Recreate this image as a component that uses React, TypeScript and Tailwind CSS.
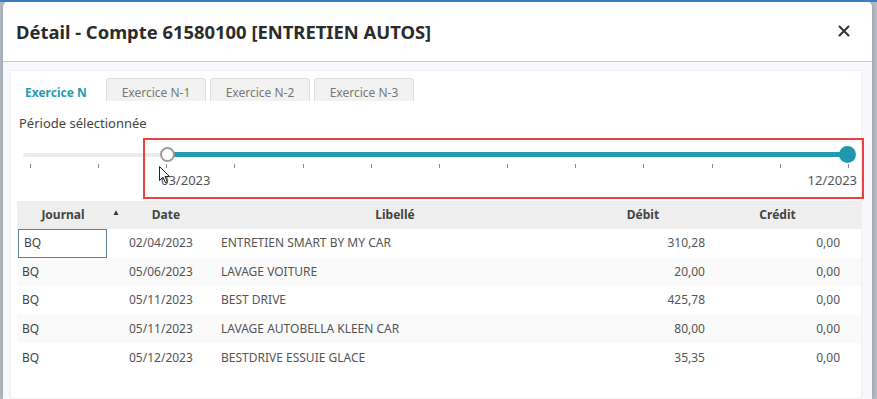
import React from "react";

const rows = [
  { journal: "BQ", date: "02/04/2023", libelle: "ENTRETIEN SMART BY MY CAR", debit: "310,28", credit: "0,00" },
  { journal: "BQ", date: "05/06/2023", libelle: "LAVAGE VOITURE", debit: "20,00", credit: "0,00" },
  { journal: "BQ", date: "05/11/2023", libelle: "BEST DRIVE", debit: "425,78", credit: "0,00" },
  { journal: "BQ", date: "05/11/2023", libelle: "LAVAGE AUTOBELLA KLEEN CAR", debit: "80,00", credit: "0,00" },
  { journal: "BQ", date: "05/12/2023", libelle: "BESTDRIVE ESSUIE GLACE", debit: "35,35", credit: "0,00" },
];

const cols = "grid grid-cols-[92px_106px_360px_136px_133px]";

function Tabs() {
  return (
    <div className="flex items-start h-[23px] gap-[4px]">
      <div className="w-[91px] h-[23px] pl-[14px] pt-[4px] text-[12px] font-bold text-[#239cb3] leading-[22px]">Exercice N</div>
      {["Exercice N-1", "Exercice N-2", "Exercice N-3"].map((t) => (
        <div
          key={t}
          className="w-[100px] h-[23px] rounded-t-[4px] border border-b-0 border-[#dcdcdc] bg-[#f2f2f2] text-center text-[12px] leading-[22px] pt-[3px] text-[#777]"
        >
          {t}
        </div>
      ))}
    </div>
  );
}

function PeriodSlider() {
  return (
    <div className="relative h-[62px] mt-[8px]">
      <div className="absolute left-[12px] top-[13px] w-[825px] h-[4px] rounded-full bg-[#ececec]" />
      <div className="absolute left-[156px] top-[12px] w-[681px] h-[5px] bg-[#239cb3]" />
      <div className="absolute left-[149px] top-[7px] w-[15px] h-[15px] rounded-full border-2 border-[#9a9a9a] bg-white" />
      <div className="absolute left-[828px] top-[6px] w-[17px] h-[17px] rounded-full bg-[#1f98ae]" />
      <div className="absolute left-[19px] top-[24px] w-[819px] flex justify-between">
        {Array.from({ length: 13 }).map((_, i) => (
          <div key={i} className="w-px h-[4px] bg-[#8a8a8a]" />
        ))}
      </div>
      <div className="absolute left-[150px] top-[31px] text-[13px] text-[#555]">03/2023</div>
      <div className="absolute right-[4px] top-[31px] text-[13px] text-[#555]">12/2023</div>
    </div>
  );
}

export default function App() {
  return (
    <div
      className="relative w-[877px] h-[399px] overflow-hidden bg-[#b9c0c9]"
      style={{ fontFamily: '"Noto Sans", "Open Sans", sans-serif' }}
    >
      <div className="absolute left-0 top-0 w-full h-[2px] bg-[#3a7fc4]" />
      <div className="ml-[3px] mt-[1px] w-[869px] h-[398px] rounded-t-[6px] bg-white flex flex-col shadow-[0_0_6px_rgba(0,0,0,0.25)]">
        <div className="h-[61px] flex items-center justify-between pl-[13px] pr-[22px] border-b border-[#c8c8cc] shrink-0">
          <div className="text-[18.4px] font-bold text-[#2b2b2b] pt-[1px]">
            Détail - Compte 61580100 [ENTRETIEN AUTOS]
          </div>
          <svg width="12" height="12" viewBox="0 0 12 12">
            <path d="M1.5 1.5 L10.5 10.5 M10.5 1.5 L1.5 10.5" stroke="#333" strokeWidth="2" strokeLinecap="round" />
          </svg>
        </div>
        <div className="flex-1 bg-[#f6f8fb] pl-[7px] pr-[10px] pt-[8px]">
          <div className="h-full bg-white border border-[#eef0f3] pt-[7px]">
            <Tabs />
            <div className="pl-[8px] mt-[13px] text-[13px] text-[#444] leading-[18px]">Période sélectionnée</div>
            <PeriodSlider />
            <div className="pl-[6px] -mt-[1px]">
              <div className={`${cols} relative h-[28px] bg-[#eeeeee] text-[12px] font-bold text-[#444] items-center`}>
                <div className="text-center">Journal</div>
                <div className="text-center pl-[8px]">Date</div>
                <div className="text-center">Libellé</div>
                <div className="text-center">Débit</div>
                <div className="text-center">Crédit</div>
                <span className="absolute left-[95px] top-[5px] text-[8px] text-[#333]">▲</span>
              </div>
              {rows.map((r, i) => (
                <div
                  key={i}
                  className={`${cols} h-[28.6px] items-center text-[12px] text-[#555] ${i % 2 === 1 ? "bg-[#fafafa]" : "bg-white"}`}
                >
                  <div className={`h-full flex items-center pl-[5px] text-[#444] ${i === 0 ? "ml-px w-[89px] border border-[#5b8296]" : ""}`}>
                    {r.journal}
                  </div>
                  <div className="pl-[20px]">{r.date}</div>
                  <div className="pl-[6px]">{r.libelle}</div>
                  <div className="text-right pr-[6px]">{r.debit}</div>
                  <div className="text-right pr-[4px]">{r.credit}</div>
                </div>
              ))}
            </div>
          </div>
        </div>
      </div>
      <div className="absolute left-[143px] top-[138px] w-[721px] h-[61px] border-[2px] border-[#ee4040]" />
      <svg className="absolute left-[159px] top-[166px]" width="11" height="18" viewBox="0 0 11 18">
        <path d="M0.5 0.5 L0.5 14.5 L4 11.2 L6.5 16.8 L8.4 16 L6 10.5 L10.5 10.5 Z" fill="#fff" stroke="#222" strokeWidth="1" strokeLinejoin="round" />
      </svg>
    </div>
  );
}
